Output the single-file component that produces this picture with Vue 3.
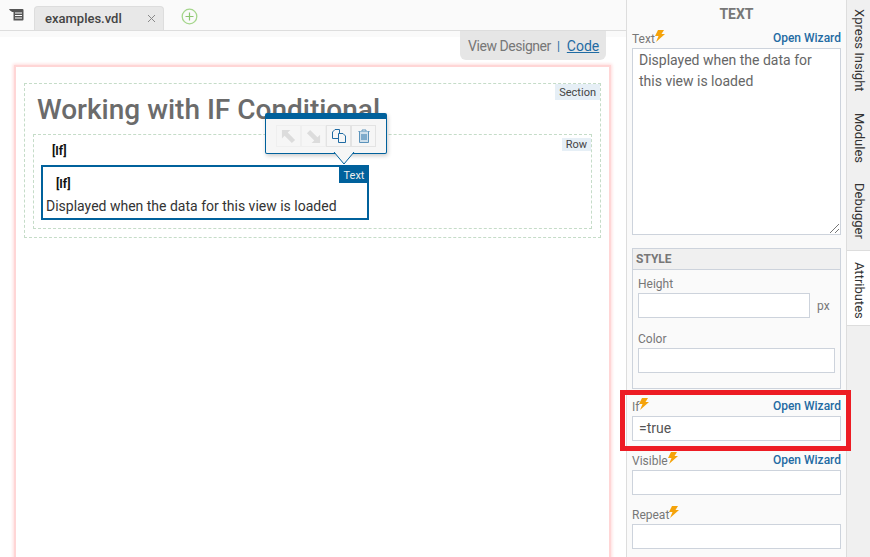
<script setup>
const sideTabs = [
  { label: 'Xpress Insight', height: 104, pad: 9 },
  { label: 'Modules', height: 69, pad: 9 },
  { label: 'Debugger', height: 77, pad: 10 },
  { label: 'Attributes', height: 76, pad: 11, active: true },
]
</script>

<template>
  <div class="app">
    <main class="main">
      <header class="tabbar">
        <svg class="list-icon" width="16" height="13" viewBox="0 0 16 13">
          <path d="M0 1h13.500a1 1 0 0 1 1 1v9.500a1 1 0 0 1-1 1H4.500V4H3.200L1 2.500z" fill="#555" />
          <path d="M6 5h7M6 7.500h7M6 10h7" stroke="#fff" stroke-width="1" />
        </svg>
        <div class="file-tab">
          <span>examples.vdl</span>
          <svg width="9" height="9" viewBox="0 0 9 9"><path d="M1 1l7 7M8 1l-7 7" stroke="#888" stroke-width="1" /></svg>
        </div>
        <svg class="add-icon" width="17" height="17" viewBox="0 0 17 17">
          <circle cx="8.500" cy="8.500" r="7.300" fill="none" stroke="#a5d68c" stroke-width="1.300" />
          <path d="M8.500 4.500v8M4.500 8.500h8" stroke="#8cc56f" stroke-width="1.200" />
        </svg>
      </header>
      <div class="strip"></div>
      <div class="view-switch">
        <span>View Designer</span><i>|</i><a>Code</a>
      </div>
      <div class="page">
        <section class="section">
          <span class="tag">Section</span>
          <h1>Working with IF Conditional</h1>
          <div class="row">
            <span class="tag">Row</span>
            <div class="if-label">[If]</div>
            <div class="text-box">
              <span class="text-tag">Text</span>
              <div class="if-label inner">[If]</div>
              <p>Displayed when the data for this view is loaded</p>
            </div>
          </div>
        </section>
      </div>
      <div class="popup">
        <div class="popup-btns">
          <button class="off">
            <svg width="15" height="15" viewBox="0 0 16 16"><path d="M1 1h9L7.200 3.800 15 11.600 11.600 15 3.800 7.200 1 10z" fill="#dcdcdc" /></svg>
          </button>
          <button class="off">
            <svg width="15" height="15" viewBox="0 0 16 16"><path d="M15 15H6l2.800-2.800L1 4.400 4.400 1l7.800 7.800L15 6z" fill="#dcdcdc" /></svg>
          </button>
          <button>
            <svg width="14" height="14" viewBox="0 0 14 14" fill="#f6f6f6" stroke="#1f6ba3" stroke-width="1">
              <path d="M3 .5h4.500v9H.5V3z" />
              <path d="M6.500 4.500H11l2.500 2.500v6.500h-7z" />
            </svg>
          </button>
          <button>
            <svg width="12" height="14" viewBox="0 0 12 14" fill="none" stroke="#5b93bb" stroke-width="1">
              <path d="M.5 2.500h11M4 2.500V1h4v1.500" />
              <path d="M1.500 2.500v11h9v-11" fill="#cfe0ec" />
              <path d="M4 5v6M6 5v6M8 5v6" stroke="#2f77aa" />
            </svg>
          </button>
        </div>
        <svg class="arrow" width="22" height="13" viewBox="0 0 22 13">
          <path d="M1 0l10 12L21 0z" fill="#f6f6f6" />
          <path d="M1 0l10 12L21 0" fill="none" stroke="#00619c" stroke-width="1" />
        </svg>
      </div>
    </main>

    <aside class="panel">
      <h2>TEXT</h2>
      <div class="field first">
        <div class="field-head">
          <label>Text<svg class="bolt" width="10" height="12" viewBox="0 0 10 12"><path d="M3 0h6L6.500 4H10L1 12l2.500-6H0z" fill="#f5a30a" /></svg></label>
          <a>Open Wizard</a>
        </div>
        <div class="textarea">
          Displayed when the data for this view is loaded
          <svg class="grip" width="9" height="9" viewBox="0 0 9 9"><path d="M0 9l9-9M5 9l4-4" stroke="#777" stroke-width="1" /></svg>
        </div>
      </div>

      <div class="style-box">
        <div class="style-head">STYLE</div>
        <div class="style-body">
          <label>Height</label>
          <div class="height-row">
            <div class="input"></div>
            <span>px</span>
          </div>
          <label class="color-label">Color</label>
          <div class="input"></div>
        </div>
      </div>

      <div class="field if-field">
        <div class="field-head">
          <label>If<svg class="bolt" width="10" height="12" viewBox="0 0 10 12"><path d="M3 0h6L6.500 4H10L1 12l2.500-6H0z" fill="#f5a30a" /></svg></label>
          <a>Open Wizard</a>
        </div>
        <div class="input value">=true</div>
      </div>

      <div class="field visible-field">
        <div class="field-head">
          <label>Visible<svg class="bolt" width="10" height="12" viewBox="0 0 10 12"><path d="M3 0h6L6.500 4H10L1 12l2.500-6H0z" fill="#f5a30a" /></svg></label>
          <a>Open Wizard</a>
        </div>
        <div class="input"></div>
      </div>

      <div class="field repeat-field">
        <div class="field-head">
          <label>Repeat<svg class="bolt" width="10" height="12" viewBox="0 0 10 12"><path d="M3 0h6L6.500 4H10L1 12l2.500-6H0z" fill="#f5a30a" /></svg></label>
        </div>
        <div class="input"></div>
      </div>
      <div class="highlight"></div>
    </aside>

    <nav class="side-tabs">
      <div
        v-for="t in sideTabs"
        :key="t.label"
        class="side-tab"
        :class="{ active: t.active }"
        :style="{ height: t.height + 'px', paddingTop: t.pad + 'px' }"
      >{{ t.label }}</div>
    </nav>
  </div>
</template>

<style scoped>
.app {
  display: flex;
  position: relative;
  width: 870px;
  height: 557px;
  overflow: hidden;
  background: #fff;
  font-family: Roboto, "Liberation Sans", sans-serif;
  color: #333;
}
.main {
  position: relative;
  width: 626px;
  flex: none;
  border-right: 1px solid #ddd;
  overflow: hidden;
}
.tabbar {
  display: flex;
  align-items: flex-end;
  height: 30px;
  background: #fafafa;
  border-bottom: 1px solid #ddd;
  box-sizing: content-box;
}
.list-icon {
  margin: 0 9px 9px 9px;
}
.file-tab {
  display: flex;
  align-items: center;
  justify-content: space-between;
  box-sizing: border-box;
  width: 130px;
  height: 24px;
  padding: 0 7px 0 10px;
  background: #e8e8e8;
  border: 1px solid #ddd;
  border-bottom: 0;
  border-radius: 4px 4px 0 0;
  font-size: 13px;
  font-weight: 500;
  color: #444;
}
.add-icon {
  margin: 0 0 5px 17px;
}
.strip {
  height: 6px;
  background: #fafafa;
}
.view-switch {
  position: absolute;
  top: 31px;
  right: 20px;
  display: flex;
  align-items: center;
  box-sizing: border-box;
  width: 146px;
  height: 29px;
  padding-left: 8px;
  background: #e6e6e6;
  border-radius: 0 0 6px 6px;
  font-size: 14px;
  color: #777;
}
.view-switch span {
  letter-spacing: -0.45px;
}
.view-switch i {
  margin: 0 7px 0 6px;
  font-style: normal;
  font-size: 12px;
  color: #1f6ba3;
}
.view-switch a {
  color: #1f6ba3;
  text-decoration: underline;
}
.page {
  box-sizing: border-box;
  margin: 28px 15px 0 14px;
  height: 522px;
  padding: 16px 8px 0 8px;
  border: 2px solid #ffd6d6;
  box-shadow: 0 0 3px 1px #ffdcdc;
}
.section {
  position: relative;
  box-sizing: border-box;
  height: 155px;
  padding: 0 8px;
  border: 1px dashed #c5dcc8;
}
.tag {
  position: absolute;
  top: 0;
  right: 0;
  padding: 0 4px;
  height: 16px;
  line-height: 18px;
  background: #e6eff6;
  font-size: 11px;
  color: #444;
}
h1 {
  margin: 8px 0 0 4px;
  height: 42px;
  line-height: 36px;
  font-size: 28px;
  font-weight: 500;
  color: #6b6b6b;
}
.row {
  position: relative;
  box-sizing: border-box;
  height: 95px;
  padding: 0 7px;
  border: 1px dashed #c5dcc8;
}
.row .tag {
  top: 3px;
  height: 13px;
  line-height: 14px;
}
.if-label {
  margin: 8px 0 0 11px;
  height: 16px;
  line-height: 16px;
  font-size: 12px;
  font-weight: 700;
  color: #111;
}
.if-label.inner {
  margin: 9px 0 0 10px;
}
.text-box {
  position: relative;
  box-sizing: border-box;
  margin-top: 6px;
  width: 328px;
  height: 55px;
  padding: 0 3px;
  border: 2px solid #00619c;
}
.text-box p {
  margin: 6px 0 0;
  font-size: 14px;
  line-height: 16px;
  color: #333;
}
.text-tag {
  position: absolute;
  top: -2px;
  right: -2px;
  width: 30px;
  height: 18px;
  line-height: 22px;
  text-align: center;
  background: #00619c;
  color: #eee;
  font-size: 11px;
}
.popup {
  position: absolute;
  left: 265px;
  top: 113px;
  box-sizing: border-box;
  width: 122px;
  height: 41px;
  background: #f6f6f6;
  border: 1px solid #00619c;
  border-top-width: 6px;
  border-radius: 2px;
  box-shadow: 1px 2px 4px rgba(0, 0, 0, 0.2);
}
.popup-btns {
  display: flex;
  padding: 6px 0 0 10px;
}
.popup-btns button {
  display: flex;
  align-items: center;
  justify-content: center;
  box-sizing: border-box;
  width: 25px;
  height: 22px;
  padding: 0;
  background: #f6f6f6;
  border: 1px solid #e3e3e3;
}
.popup-btns button.off {
  border-color: #efefef;
}
.arrow {
  position: absolute;
  left: 67px;
  top: 33px;
}
.panel {
  position: relative;
  box-sizing: border-box;
  width: 220px;
  flex: none;
  padding: 0 5px;
  background: #fafafa;
  border-right: 1px solid #ddd;
}
h2 {
  margin: 0;
  padding-top: 6px;
  height: 25px;
  box-sizing: content-box;
  line-height: 16px;
  text-align: center;
  font-size: 14px;
  font-weight: 700;
  color: #777;
}
.field-head {
  display: flex;
  align-items: center;
  justify-content: space-between;
  height: 14px;
  margin-bottom: 3px;
}
label {
  font-size: 12px;
  color: #777;
}
.bolt {
  vertical-align: 1px;
}
.field-head a {
  font-size: 12px;
  font-weight: 500;
  color: #1f6ba3;
}
.textarea {
  position: relative;
  box-sizing: border-box;
  height: 187px;
  padding: 1px 6px;
  background: #fff;
  border: 1px solid #cdd3dc;
  font-size: 14px;
  line-height: 21px;
  color: #666;
}
.grip {
  position: absolute;
  right: 1px;
  bottom: 1px;
}
.style-box {
  margin-top: 13px;
  height: 141px;
  box-sizing: border-box;
  border: 1px solid #cdd3dc;
}
.style-head {
  box-sizing: border-box;
  height: 21px;
  line-height: 20px;
  padding-left: 3px;
  background: #f0f0f0;
  border-bottom: 1px solid #cdd3dc;
  font-size: 12px;
  font-weight: 700;
  color: #777;
}
.style-body {
  padding: 6px 5px 0 5px;
}
.style-body label {
  display: block;
  height: 17px;
  line-height: 17px;
}
.color-label {
  margin-top: 13px;
}
.height-row {
  display: flex;
  align-items: center;
}
.height-row .input {
  width: 172px;
}
.height-row span {
  margin-left: 7px;
  font-size: 12px;
  color: #777;
}
.input {
  box-sizing: border-box;
  height: 25px;
  background: #fff;
  border: 1px solid #cdd3dc;
}
.input.value {
  padding-left: 6px;
  line-height: 23px;
  font-size: 14px;
  color: #555;
}
.if-field {
  margin-top: 10px;
}
.visible-field {
  margin-top: 12px;
}
.repeat-field {
  margin-top: 12px;
}
.highlight {
  position: absolute;
  z-index: 2;
  left: -7px;
  top: 390px;
  box-sizing: border-box;
  width: 231px;
  height: 61px;
  border: 5px solid #ed1c24;
  pointer-events: none;
}
.side-tabs {
  flex: 1;
  background: #f0f0f0;
}
.side-tab {
  box-sizing: border-box;
  line-height: 24px;
  writing-mode: vertical-rl;
  font-size: 13px;
  color: #333;
}
.side-tab.active {
  background: #fff;
  margin-left: -1px;
  padding-left: 1px;
  border-top: 1px solid #ddd;
  border-bottom: 1px solid #ddd;
}
</style>
